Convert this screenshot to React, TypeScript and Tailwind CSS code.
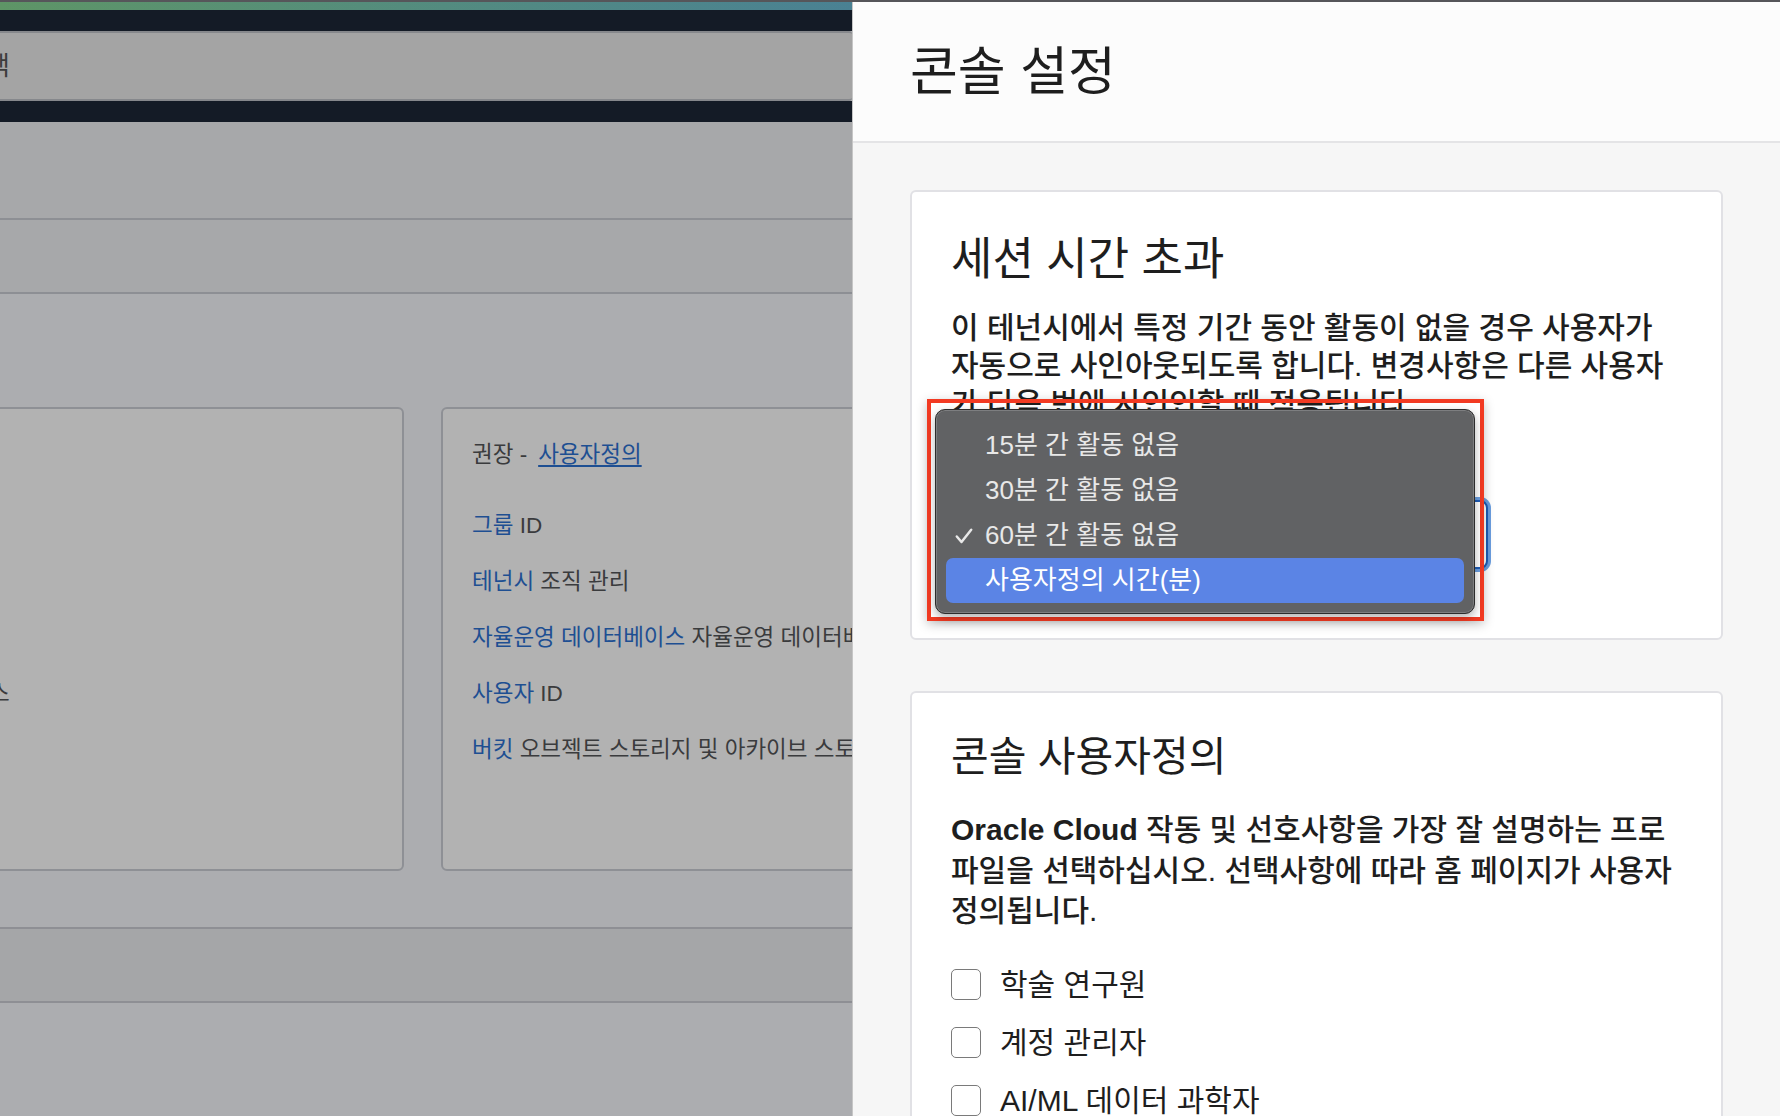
import React from "react";

const FONT = "font-['Liberation_Sans','Noto_Sans_CJK_KR',sans-serif]";

function LeftPage() {
  return (
    <div className="w-[852px] shrink-0 overflow-hidden flex flex-col bg-[#acadb0]">
      <div className="h-[8px] shrink-0 bg-gradient-to-r from-[#5e9566] to-[#4a8193]" />
      <div className="h-[21px] shrink-0 bg-[#141b26]" />
      <div className="h-[70px] shrink-0 bg-[#a4a4a4] border-y-2 border-[#86888c] rounded-r-[3px] flex items-center">
        <span className="-ml-[14px] text-[26px] text-[#3d3d3d]">색</span>
      </div>
      <div className="h-[21px] shrink-0 bg-[#141b26]" />
      <div className="h-[98px] shrink-0 bg-[#a7a8aa] border-b-2 border-[#8d8f94]" />
      <div className="h-[74px] shrink-0 bg-[#a7a8aa] border-b-2 border-[#8d8f94]" />
      <div className="shrink-0 pt-[113px] flex">
        <div className="-ml-[20px] w-[424px] h-[464px] shrink-0 rounded-[6px] border-2 border-[#8e9095] bg-[#b2b2b2] pt-[271px]">
          <div className="pl-[7px] text-[22.5px] leading-[28px] text-[#3a3b3d]">스</div>
        </div>
        <div className="ml-[37px] w-[440px] h-[464px] shrink-0 rounded-[6px] border-2 border-[#8e9095] bg-[#b2b2b2] pl-[29px] pt-[32px] text-[22.5px] leading-[28px] text-[#3a3b3d] whitespace-nowrap">
          <div className="mb-[43px]">
            권장 -<span className="ml-[11px] text-[#1e4f92] underline underline-offset-[3px]">사용자정의</span>
          </div>
          <div className="flex flex-col gap-[28px]">
            <div><span className="text-[#1e4f92]">그룹</span> ID</div>
            <div><span className="text-[#1e4f92]">테넌시</span> 조직 관리</div>
            <div><span className="text-[#1e4f92]">자율운영 데이터베이스</span> 자율운영 데이터베이스</div>
            <div><span className="text-[#1e4f92]">사용자</span> ID</div>
            <div><span className="text-[#1e4f92]">버킷</span> 오브젝트 스토리지 및 아카이브 스토리지</div>
          </div>
        </div>
      </div>
      <div className="mt-[56px] h-[76px] shrink-0 bg-[#a5a6a8] border-y-2 border-[#8e8f94]" />
    </div>
  );
}

function Check() {
  return (
    <svg width="18" height="16" viewBox="0 0 18 16" fill="none">
      <path d="M1.8 8.5 L6.5 14 L16.2 1.8" stroke="#e8e8e8" strokeWidth="2.5" strokeLinecap="round" strokeLinejoin="round" />
    </svg>
  );
}

function Menu() {
  const items = ["15분 간 활동 없음", "30분 간 활동 없음", "60분 간 활동 없음", "사용자정의 시간(분)"];
  return (
    <div className="absolute left-[15px] top-[207px] w-[557px] h-[222px] border-4 border-[#f23a22] shadow-[0_3px_10px_rgba(0,0,0,0.25)] pl-[4px] pt-[6px]">
      <div className="w-[540px] h-[205px] rounded-[10px] bg-[#616264] border border-[#2c2c2c] shadow-[inset_0_0_0_1px_rgba(255,255,255,0.18),0_4px_10px_rgba(0,0,0,0.3)] pt-[13px] px-[10px]">
        {items.map((t, i) => (
          <div
            key={t}
            className={
              "h-[45px] rounded-[7px] flex items-center text-[26px] " +
              (i === 3 ? "bg-[#5b84e5] text-white" : "text-[#e8e8e8]")
            }
          >
            <div className="w-[39px] pl-[9px] flex items-center">{i === 2 ? <Check /> : null}</div>
            <span>{t}</span>
          </div>
        ))}
      </div>
    </div>
  );
}

function Panel() {
  return (
    <div className="flex-1 min-w-0 flex flex-col bg-[#f6f6f6] border-l border-[#c6c6c6] text-[#1e1e1e]">
      <div className="h-[141px] shrink-0 bg-[#fcfcfc] border-b-2 border-[#e4e4e6] flex items-center pl-[57px]">
        <h1 className="text-[52px] leading-[60px]">콘솔 설정</h1>
      </div>
      <div className="px-[57px] pt-[47px] flex flex-col">
        <div className="relative h-[450px] shrink-0 rounded-[6px] border-2 border-[#e1e1e5] bg-white px-[39px] pt-[42px]">
          <h2 className="text-[45px] leading-[52px]">세션 시간 초과</h2>
          <p className="mt-[23px] text-[30px] leading-[38px] whitespace-nowrap font-medium">
            <span className="block">이 테넌시에서 특정 기간 동안 활동이 없을 경우 사용자가</span>
            <span className="block">자동으로 사인아웃되도록 합니다. 변경사항은 다른 사용자</span>
            <span className="block">가 다음 번에 사인인할 때 적용됩니다.</span>
          </p>
          <div className="mt-[77px] w-[537px] h-[69px] rounded-[8px] border-2 border-[#1d5cb6] ring-[3px] ring-[#6a9ee0] bg-white" />
          <Menu />
        </div>
        <div className="mt-[51px] h-[520px] shrink-0 rounded-[6px] border-2 border-[#e1e1e5] bg-white px-[39px] pt-[40px]">
          <h2 className="text-[41px] leading-[48px]">콘솔 사용자정의</h2>
          <p className="mt-[29px] text-[30px] leading-[40.5px] whitespace-nowrap font-medium">
            <span className="block">
              <span className="font-semibold">Oracle Cloud</span> 작동 및 선호사항을 가장 잘 설명하는 프로
            </span>
            <span className="block">파일을 선택하십시오. 선택사항에 따라 홈 페이지가 사용자</span>
            <span className="block">정의됩니다.</span>
          </p>
          <div className="mt-[24px] flex flex-col">
            {["학술 연구원", "계정 관리자", "AI/ML 데이터 과학자"].map((t) => (
              <label key={t} className="h-[58px] flex items-center">
                <span className="w-[30px] h-[31px] rounded-[5px] border-[1.5px] border-[#7a7a7a] bg-white shrink-0" />
                <span className="ml-[19px] text-[30px] leading-[36px]">{t}</span>
              </label>
            ))}
          </div>
        </div>
      </div>
    </div>
  );
}

export default function App() {
  return (
    <div className={"w-[1780px] h-[1116px] overflow-hidden flex flex-col bg-[#acadb0] " + FONT}>
      <div className="h-[2px] shrink-0 bg-[#56565a]" />
      <div className="flex flex-1 min-h-0">
        <LeftPage />
        <Panel />
      </div>
    </div>
  );
}
